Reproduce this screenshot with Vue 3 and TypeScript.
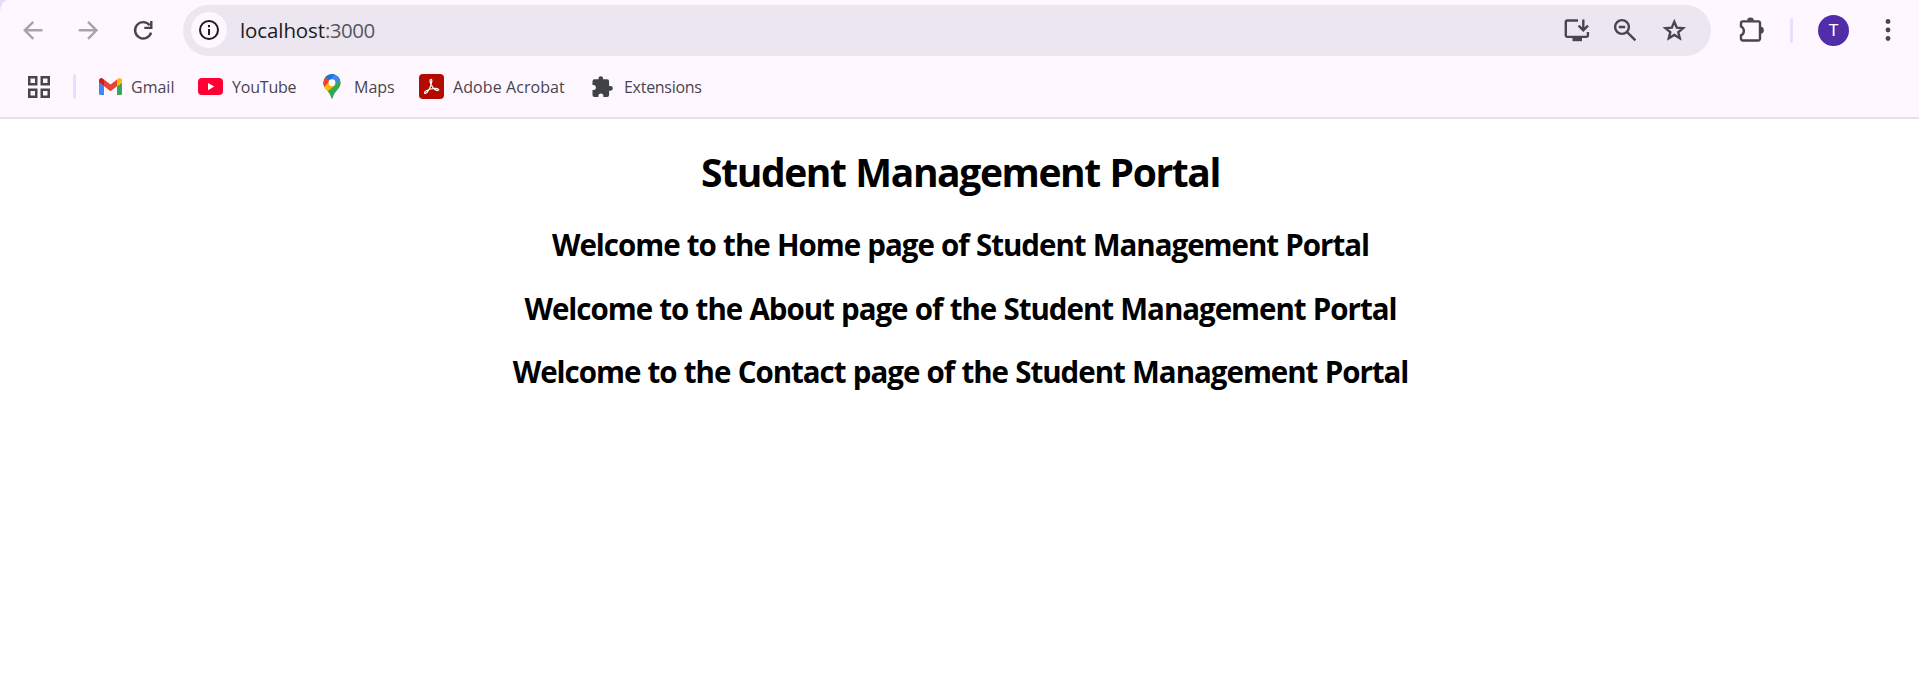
<script setup lang="ts">
interface Bookmark {
  id: string
  label: string
}

const bookmarks: Bookmark[] = [
  { id: 'gmail', label: 'Gmail' },
  { id: 'youtube', label: 'YouTube' },
  { id: 'maps', label: 'Maps' },
  { id: 'acrobat', label: 'Adobe Acrobat' },
  { id: 'extensions', label: 'Extensions' },
]

const pages: { id: string; text: string }[] = [
  { id: 'home', text: 'Welcome to the Home page of Student Management Portal' },
  { id: 'about', text: 'Welcome to the About page of the Student Management Portal' },
  { id: 'contact', text: 'Welcome to the Contact page of the Student Management Portal' },
]
</script>

<template>
  <div class="window">
    <header class="chrome">
      <div class="toolbar">
        <nav class="history">
          <svg class="icon faded" viewBox="0 0 30 30"><path d="M24.5 15.3H7M15.3 6.8L6.8 15.3l8.500 8.500" /></svg>
          <svg class="icon faded" viewBox="0 0 30 30"><path d="M5.800 15.300H23.500M15 6.800l8.500 8.500-8.500 8.500" /></svg>
          <svg class="icon" viewBox="0 0 30 30">
            <path d="M21.700 10.200A8.200 8.200 0 1 0 23.100 17.700M23.300 6V12.900H16.300" />
          </svg>
        </nav>

        <div class="omnibox">
          <span class="site-info">
            <svg viewBox="0 0 22 22">
              <circle cx="11" cy="11" r="9" fill="none" stroke="#1d1b20" stroke-width="2" />
              <path d="M10 10h2v6h-2zM10 6h2v2.200h-2z" fill="#1d1b20" />
            </svg>
          </span>
          <span class="url">localhost<span class="port">:3000</span></span>
          <div class="omni-actions">
            <svg class="omni-icon install" viewBox="0 0 30 30">
              <path d="M16 5.500H5.300a1.500 1.500 0 0 0-1.500 1.500V20.400a1.500 1.500 0 0 0 1.500 1.500H24.400a1.500 1.500 0 0 0 1.500-1.500V17M21.300 4.600V14.500M16.600 10.700l4.700 4.700 4.700-4.700" />
              <path class="solid" d="M10.500 22h9.500v4.200h-9.500z" />
            </svg>
            <svg class="omni-icon" viewBox="0 0 30 30">
              <circle cx="12" cy="12" r="6.900" />
              <path d="M8.800 12h6.400M17.100 17.100l8.300 8.300" />
            </svg>
            <svg class="omni-icon" viewBox="0 0 30 30">
              <path d="M15.300 6.800l2.500 5.800 6.300.5-4.800 4.100 1.500 6.100-5.500-3.300-5.500 3.300 1.500-6.100-4.800-4.100 6.300-.5z" />
            </svg>
          </div>
        </div>

        <svg class="icon puzzle" viewBox="0 0 30 30">
          <path d="M5.700 6.400H21.300a1.700 1.700 0 0 1 1.700 1.700V23.800a1.700 1.700 0 0 1-1.700 1.700H5.700a1.700 1.700 0 0 1-1.700-1.700V20.400a4.900 4.900 0 0 0 0-8.900V8.100a1.700 1.700 0 0 1 1.700-1.700z" />
          <path class="solid" d="M10.100 5.800a3.400 3.400 0 0 1 6.800 0zM23.500 11.800a3.300 3.300 0 0 1 0 6.700z" />
        </svg>
        <span class="divider toolbar-divider"></span>
        <span class="avatar">T</span>
        <svg class="menu" viewBox="0 0 6 24">
          <circle cx="3" cy="3.500" r="2.400" />
          <circle cx="3" cy="12" r="2.400" />
          <circle cx="3" cy="20.500" r="2.400" />
        </svg>
      </div>

      <div class="bookmarks">
        <svg class="apps" viewBox="0 0 22 22">
          <path d="M1.250 1.250h7v7h-7zM13.750 1.250h7v7h-7zM1.250 13.750h7v7h-7zM13.750 13.750h7v7h-7z" />
        </svg>
        <span class="divider"></span>
        <a v-for="b in bookmarks" :key="b.id" class="bookmark" :class="b.id">
          <svg v-if="b.id === 'gmail'" class="logo" viewBox="0 0 25 25">
            <path fill="#4285f4" d="M1 8.500l5 3.700V21H2.500A1.500 1.500 0 0 1 1 19.500z" />
            <path fill="#34a853" d="M24 8.500l-5 3.700V21h3.500a1.500 1.500 0 0 0 1.500-1.500z" />
            <path fill="#ea4335" d="M6 5.600l6.500 4.900L19 5.600v6.700l-6.500 4.900L6 12.300z" />
            <path fill="#c5221f" d="M1 6.600C1 4 3.700 3.300 5.200 5L6 5.600v6.700L1 8.600z" />
            <path fill="#fbbc04" d="M24 6.600c0-2.600-2.700-3.300-4.200-1.600l-.8.600v6.700l5-3.700z" />
          </svg>
          <svg v-else-if="b.id === 'youtube'" class="logo" viewBox="0 0 25 25">
            <rect x="0" y="4" width="25" height="17" rx="4" fill="#ff0033" />
            <path d="M10 9v7.200l6.300-3.600z" fill="#fff" />
          </svg>
          <svg v-else-if="b.id === 'maps'" class="logo pin" viewBox="0 0 18 25">
            <defs>
              <clipPath id="pin-shape">
                <path d="M9 0a8.700 8.700 0 0 0-8.700 8.700c0 3 1.300 4.700 3.400 7.300C6 18.800 7.500 20.700 8.300 24c.2.900 1.200.9 1.400 0 .8-3.300 2.300-5.200 4.600-8 2.100-2.600 3.400-4.300 3.400-7.300A8.700 8.700 0 0 0 9 0z" />
              </clipPath>
            </defs>
            <g clip-path="url(#pin-shape)">
              <path fill="#34a853" d="M0 0h18v25H0z" />
              <path fill="#fbbc04" d="M-1 14L7 5l5.500 6L3.200 18.500z" />
              <path fill="#ea4335" d="M2.300 3l4.500 3.700-5.800 6.900L-1 9z" />
              <path fill="#1a73e8" d="M2.300 3l4.500 3.700L12.500 0H4z" />
              <path fill="#4285f4" d="M11.700.4L17 5l-5.700 6.500-4.900-4.300z" />
            </g>
            <circle cx="9" cy="8.700" r="3.400" fill="#fff" />
          </svg>
          <svg v-else-if="b.id === 'acrobat'" class="logo" viewBox="0 0 25 25">
            <rect width="25" height="25" rx="4" fill="#b30b00" />
            <path fill="none" stroke="#fff" stroke-width="1.250" stroke-linejoin="round" d="M12.100 5.300c-1.600 0-1.100 3.400.4 6 1.500 2.700 4.300 5.300 6.300 5.200 1.800-.3.800-2.100-2.500-2.200-3 0-6.800 1-9.200 2.500-2.300 1.500-1.700 3.200-.4 2.500 1.900-1 4.100-5 5.200-8.200.9-2.700 1.400-5.800.2-5.800z" />
          </svg>
          <svg v-else class="logo piece" viewBox="0 0 21 21">
            <path d="M18.500 10h-1.400V5.200a2 2 0 0 0-2-2h-4V2.500a2.300 2.300 0 0 0-4.600 0v.7h-4a2 2 0 0 0-2 2v3.900h.9a2.500 2.500 0 0 1 0 5H.5V19a2 2 0 0 0 2 2h3.900v-1a2.500 2.500 0 0 1 5 0v1h3.700a2 2 0 0 0 2-2v-4.300h1.400a2.350 2.350 0 0 0 0-4.700z" />
          </svg>
          <span class="label">{{ b.label }}</span>
        </a>
      </div>
    </header>

    <main class="page">
      <h1>Student Management Portal</h1>
      <h2 v-for="p in pages" :key="p.id">{{ p.text }}</h2>
    </main>
  </div>
</template>

<style>
html,
body {
  margin: 0;
  background: #fff;
}
</style>

<style scoped>
.window {
  height: 692px;
  overflow: hidden;
  background: #e6dcfa;
  font-family: 'Segoe UI', 'Open Sans', 'Noto Sans', sans-serif;
}

.chrome {
  box-sizing: border-box;
  height: 119px;
  background: #fef7ff;
  border-bottom: 2px solid #e7e0e8;
  border-top-left-radius: 8px 12px;
}

.toolbar {
  display: flex;
  align-items: center;
  height: 60px;
}

.history {
  display: flex;
  gap: 25px;
  margin-left: 18px;
  width: 165px;
}

.icon,
.omni-icon {
  width: 30px;
  height: 30px;
  flex: none;
  fill: none;
  stroke: #49454e;
  stroke-width: 2.4;
}

.icon.faded {
  stroke: #a8a3aa;
}

.icon .solid,
.omni-icon .solid {
  fill: #49454e;
  stroke: none;
}

.omnibox {
  display: flex;
  align-items: center;
  box-sizing: border-box;
  width: 1528px;
  height: 51px;
  padding: 0 22px 0 8px;
  border-radius: 26px;
  background: #ece6f0;
}

.site-info {
  display: flex;
  align-items: center;
  justify-content: center;
  width: 36px;
  height: 36px;
  border-radius: 50%;
  background: #fef7ff;
}

.site-info svg {
  width: 22px;
  height: 22px;
}

.url {
  margin-left: 13px;
  font-size: 20.5px;
  line-height: 28px;
  letter-spacing: -0.1px;
  color: #1d1b20;
  white-space: nowrap;
}

.port {
  letter-spacing: -0.5px;
  color: #5a565f;
}

.omni-actions {
  display: flex;
  gap: 19px;
  margin-left: auto;
}

.install {
  margin-right: -1px;
}

.puzzle {
  margin-left: 26px;
}

.divider {
  width: 3px;
  height: 25px;
  border-radius: 2px;
  background: #eaddff;
}

.toolbar-divider {
  margin-left: 23px;
}

.avatar {
  display: flex;
  align-items: center;
  justify-content: center;
  width: 31px;
  height: 31px;
  margin-left: 25px;
  border-radius: 50%;
  background: #512da8;
  color: #fff;
  font-family: Roboto, sans-serif;
  font-size: 17px;
}

.menu {
  width: 6px;
  height: 24px;
  margin-left: 36px;
  fill: #49454e;
}

.bookmarks {
  display: flex;
  align-items: center;
  height: 53px;
  padding-left: 28px;
}

.apps {
  width: 22px;
  height: 22px;
  margin-right: 23px;
  fill: none;
  stroke: #49454e;
  stroke-width: 2.5;
}

.bookmark {
  display: flex;
  align-items: center;
  color: #49454e;
  font-size: 16px;
  line-height: 22px;
  white-space: nowrap;
}

.logo {
  flex: none;
  width: 25px;
  height: 25px;
  margin-right: 9px;
}

.logo.pin {
  width: 18px;
  margin-right: 13px;
}

.logo.piece {
  width: 21px;
  height: 21px;
  margin-right: 11px;
  fill: #3f4346;
}

.gmail {
  width: 100px;
  margin-left: 22px;
}

.gmail .logo {
  margin-right: 8px;
}

.youtube {
  width: 125px;
  letter-spacing: -0.2px;
}

.maps {
  width: 96px;
}

.acrobat {
  width: 173px;
  letter-spacing: 0.08px;
}

.extensions {
  letter-spacing: -0.28px;
}

.page {
  box-sizing: border-box;
  height: 573px;
  padding: 26px 0 0 2px;
  background: #fff;
  color: #000;
  text-align: center;
}

h1 {
  margin: 0 0 27px;
  font-size: 39px;
  line-height: 53px;
  font-weight: 700;
  letter-spacing: -1.4px;
  word-spacing: 1px;
}

h2 {
  margin: 0 0 23.5px;
  font-size: 29.5px;
  line-height: 40px;
  font-weight: 700;
  letter-spacing: -1.02px;
  word-spacing: 0.6px;
}
</style>
